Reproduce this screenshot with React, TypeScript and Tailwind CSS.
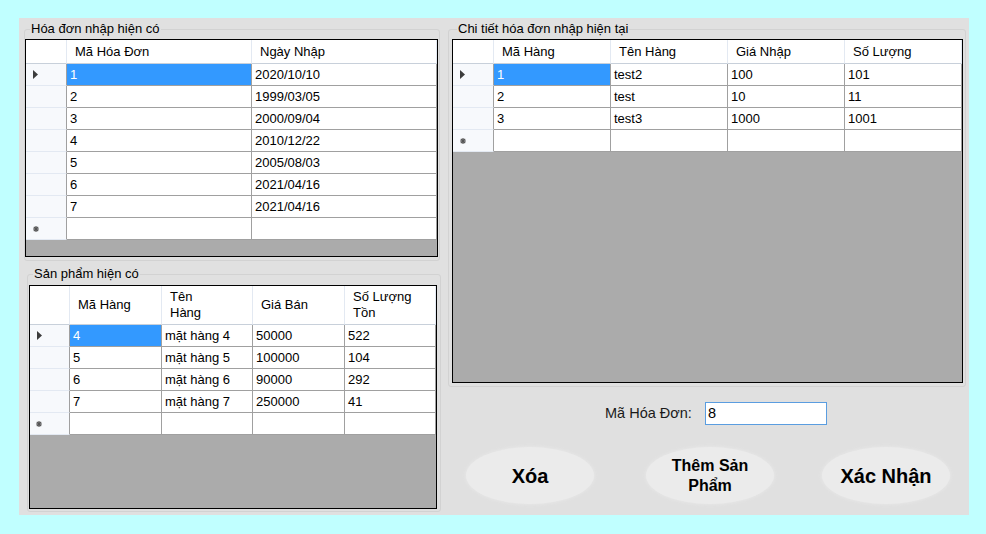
import React from "react";

type Column = { title: React.ReactNode; width: number };

function RowArrow() {
  return (
    <svg width="5" height="9" viewBox="0 0 5 9">
      <path d="M0 0 L5 4.5 L0 9 Z" fill="#3c3c3c" />
    </svg>
  );
}

function NewRowMark() {
  return (
    <svg width="6" height="6" viewBox="0 0 6 6">
      <path d="M3 0 V6 M0 3 H6 M0.8 0.8 L5.2 5.2 M5.2 0.8 L0.8 5.2" stroke="#555" strokeWidth="1.2" />
    </svg>
  );
}

function DataGrid({
  columns,
  rows,
  rowHeaderWidth,
  headerHeight,
  width,
  height,
}: {
  columns: Column[];
  rows: string[][];
  rowHeaderWidth: number;
  headerHeight: number;
  width: number;
  height: number;
}) {
  return (
    <div
      className="border border-black bg-[#ababab] overflow-hidden flex flex-col"
      style={{ width, height }}
    >
      <div className="flex bg-white shrink-0" style={{ height: headerHeight }}>
        <div
          className="shrink-0 border-r border-b border-r-[#e3e9f2] border-b-[#c8d0da] bg-white"
          style={{ width: rowHeaderWidth }}
        />
        {columns.map((c, i) => (
          <div
            key={i}
            className="shrink-0 flex items-center pl-[8px] border-r border-b border-r-[#e3e9f2] border-b-[#c8d0da] leading-[16px]"
            style={{ width: c.width }}
          >
            {c.title}
          </div>
        ))}
      </div>
      {[...rows, null].map((r, ri) => (
        <div key={ri} className="flex h-[22px] shrink-0">
          <div
            className="shrink-0 flex items-center justify-center pr-[21px] bg-[#f7f9fc] border-r border-b border-r-[#a0a0a0] border-b-[#e3e9f2]"
            style={{ width: rowHeaderWidth }}
          >
            {ri === 0 && <RowArrow />}
            {r === null && <NewRowMark />}
          </div>
          {columns.map((c, ci) => {
            const selected = ri === 0 && ci === 0;
            return (
              <div
                key={ci}
                className={`shrink-0 flex items-center pl-[3px] border-r border-b border-[#a0a0a0] ${
                  selected ? "bg-[#3399ff] text-white" : "bg-white text-black"
                }`}
                style={{ width: c.width }}
              >
                {r ? r[ci] : ""}
              </div>
            );
          })}
        </div>
      ))}
    </div>
  );
}

function GroupLabel({ text, left }: { text: string; left: string }) {
  return (
    <span
      className={`absolute top-[-8px] ${left} px-[1px] bg-[#e0e0e0] leading-[14px] text-black`}
    >
      {text}
    </span>
  );
}

function EllipseButton({ children, className }: any) {
  return (
    <button
      className={`w-[128px] h-[57px] rounded-[50%] bg-[#ebebeb] shadow-[0_0_3px_1px_#e6e6e6] flex items-center justify-center text-center font-bold text-black ${className}`}
    >
      {children}
    </button>
  );
}

export default function App() {
  return (
    <div
      className="w-[986px] h-[534px] bg-[#c0ffff] pt-[18px] pl-[19px] text-[13px] text-black"
      style={{ fontFamily: '"Liberation Sans", Arial, sans-serif' }}
    >
      <div className="w-[950px] h-[497px] bg-[#e0e0e0] flex">
        <div className="w-[425px] flex flex-col">
          <div className="relative ml-[5px] mt-[11px] w-[416px] h-[232px] border border-[#d2d2d2] rounded-[3px]">
            <GroupLabel text="Hóa đơn nhập hiện có" left="left-[5px]" />
            <div className="mt-[9px]">
              <DataGrid
                width={413}
                height={218}
                rowHeaderWidth={41}
                headerHeight={24}
                columns={[
                  { title: "Mã Hóa Đơn", width: 185 },
                  { title: "Ngày Nhập", width: 185 },
                ]}
                rows={[
                  ["1", "2020/10/10"],
                  ["2", "1999/03/05"],
                  ["3", "2000/09/04"],
                  ["4", "2010/12/22"],
                  ["5", "2005/08/03"],
                  ["6", "2021/04/16"],
                  ["7", "2021/04/16"],
                ]}
              />
            </div>
          </div>
          <div className="relative ml-[8px] mt-[13px] w-[414px] h-[238px] border border-[#d2d2d2] rounded-[3px]">
            <GroupLabel text="Sản phẩm hiện có" left="left-[5px]" />
            <div className="mt-[10px] ml-[1px]">
              <DataGrid
                width={408}
                height={224}
                rowHeaderWidth={40}
                headerHeight={39}
                columns={[
                  { title: "Mã Hàng", width: 92 },
                  {
                    title: (
                      <span>
                        Tên
                        <br />
                        Hàng
                      </span>
                    ),
                    width: 91,
                  },
                  { title: "Giá Bán", width: 92 },
                  {
                    title: (
                      <span>
                        Số Lượng
                        <br />
                        Tồn
                      </span>
                    ),
                    width: 91,
                  },
                ]}
                rows={[
                  ["4", "mặt hàng 4", "50000", "522"],
                  ["5", "mặt hàng 5", "100000", "104"],
                  ["6", "mặt hàng 6", "90000", "292"],
                  ["7", "mặt hàng 7", "250000", "41"],
                ]}
              />
            </div>
          </div>
        </div>

        <div className="flex-1 flex flex-col">
          <div className="relative ml-[4px] mt-[11px] w-[518px] h-[358px] border border-[#d2d2d2] rounded-[3px]">
            <GroupLabel text="Chi tiết hóa đơn nhập hiện tại" left="left-[8px]" />
            <div className="mt-[9px] ml-[3px]">
              <DataGrid
                width={511}
                height={344}
                rowHeaderWidth={41}
                headerHeight={24}
                columns={[
                  { title: "Mã Hàng", width: 117 },
                  { title: "Tên Hàng", width: 117 },
                  { title: "Giá Nhập", width: 117 },
                  { title: "Số Lượng", width: 117 },
                ]}
                rows={[
                  ["1", "test2", "100", "101"],
                  ["2", "test", "10", "11"],
                  ["3", "test3", "1000", "1001"],
                ]}
              />
            </div>
          </div>

          <div className="flex items-center mt-[15px] h-[23px] text-[14.5px]">
            <span className="ml-[161px] w-[100px] text-[#1a1a1a]">Mã Hóa Đơn:</span>
            <div className="w-[122px] h-[23px] bg-white border border-[#5a9de0] flex items-center pl-[2px]">
              8
            </div>
          </div>

          <div className="flex mt-[22px]">
            <EllipseButton className="ml-[22px] text-[20px]">Xóa</EllipseButton>
            <EllipseButton className="ml-[52px] text-[16px] leading-[20px]">
              Thêm Sản
              <br />
              Phẩm
            </EllipseButton>
            <EllipseButton className="ml-[48px] text-[20px]">Xác Nhận</EllipseButton>
          </div>
        </div>
      </div>
    </div>
  );
}
